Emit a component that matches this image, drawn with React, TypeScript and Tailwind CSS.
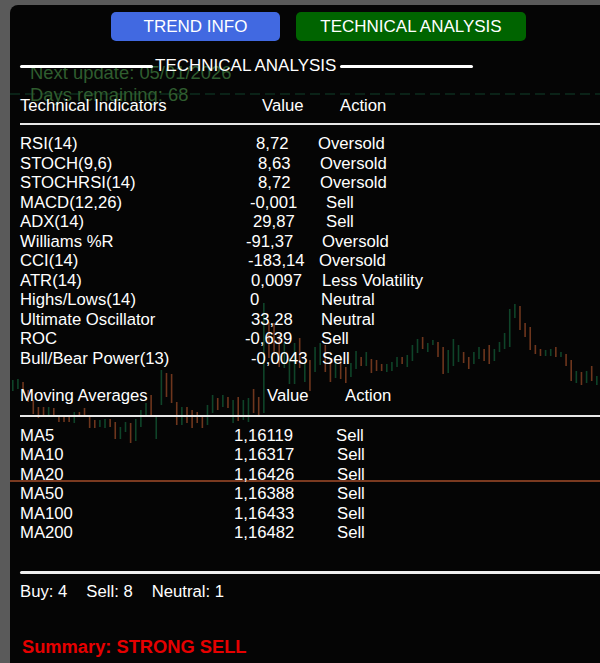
const G = "#0f4429";
const O = "#6e361d";

// [top, bottom, color] per candle, evenly spaced across the chart
const candles: [number, number, string][] = [
  [380, 391, G], [379, 389, G], [382, 393, O], [390, 402, O], [400, 414, O],
  [407, 418, O], [407, 417, O], [407, 417, G], [408, 417, O], [417, 422, O],
  [417, 422, O], [417, 422, O], [412, 423, G], [412, 417, O], [408, 417, O],
  [417, 428, O], [420, 428, O], [420, 427, G], [419, 428, G], [419, 427, O],
  [422, 439, O], [427, 439, G], [422, 432, G], [423, 443, O], [419, 441, G],
  [410, 427, G], [403, 417, G], [395, 417, O], [417, 439, G], [370, 405, G],
  [373, 397, O], [374, 403, O], [402, 425, O], [407, 425, G], [407, 423, O],
  [410, 428, O], [412, 423, O], [416, 428, O], [405, 425, G], [395, 413, G],
  [398, 410, O], [395, 407, G], [397, 408, O], [400, 423, G], [397, 421, O],
  [400, 420, G], [398, 422, G], [389, 413, O], [397, 417, O], [303, 413, G],
  [322, 358, O], [323, 355, O], [335, 367, O], [343, 368, G], [358, 384, G],
  [343, 384, G], [338, 368, O], [363, 382, G], [360, 391, O], [347, 372, G],
  [343, 365, G], [345, 372, O], [358, 382, O], [360, 378, G], [360, 379, O],
  [367, 383, O], [363, 377, G], [351, 369, G], [357, 366, O], [352, 366, G],
  [359, 373, O], [360, 371, O], [364, 371, O], [364, 372, G], [362, 371, G],
  [357, 367, G], [357, 364, O], [355, 367, G], [345, 361, G], [339, 353, G],
  [337, 349, O], [343, 352, G], [340, 345, G], [342, 357, O], [347, 374, O],
  [350, 373, G], [339, 366, G], [345, 362, G], [352, 363, O], [357, 369, O],
  [352, 364, G], [347, 359, G], [349, 361, O], [345, 364, O], [349, 361, G],
  [342, 352, G], [333, 349, G], [309, 347, G], [304, 318, G], [306, 330, O],
  [323, 337, O], [327, 350, O], [345, 354, O], [349, 356, O], [350, 356, G],
  [349, 356, G], [347, 357, O], [352, 357, G], [354, 366, O], [360, 381, O],
  [371, 383, G], [372, 385, O], [371, 383, G], [366, 381, O], [376, 385, G],
];

type Row = { name: string; value: string; action: string; valuePad: string; actionPad: string };

const indicators: Row[] = [
  { name: "RSI(14)", value: "8,72", action: "Oversold", valuePad: "pl-[26px]", actionPad: "pl-[0px]" },
  { name: "STOCH(9,6)", value: "8,63", action: "Oversold", valuePad: "pl-[28px]", actionPad: "pl-[2px]" },
  { name: "STOCHRSI(14)", value: "8,72", action: "Oversold", valuePad: "pl-[28px]", actionPad: "pl-[2px]" },
  { name: "MACD(12,26)", value: "-0,001", action: "Sell", valuePad: "pl-[20px]", actionPad: "pl-[8px]" },
  { name: "ADX(14)", value: "29,87", action: "Sell", valuePad: "pl-[23px]", actionPad: "pl-[8px]" },
  { name: "Williams %R", value: "-91,37", action: "Oversold", valuePad: "pl-[16px]", actionPad: "pl-[4px]" },
  { name: "CCI(14)", value: "-183,14", action: "Oversold", valuePad: "pl-[18px]", actionPad: "pl-[1px]" },
  { name: "ATR(14)", value: "0,0097", action: "Less Volatility", valuePad: "pl-[21px]", actionPad: "pl-[4px]" },
  { name: "Highs/Lows(14)", value: "0", action: "Neutral", valuePad: "pl-[20px]", actionPad: "pl-[3px]" },
  { name: "Ultimate Oscillator", value: "33,28", action: "Neutral", valuePad: "pl-[21px]", actionPad: "pl-[3px]" },
  { name: "ROC", value: "-0,639", action: "Sell", valuePad: "pl-[15px]", actionPad: "pl-[3px]" },
  { name: "Bull/Bear Power(13)", value: "-0,0043", action: "Sell", valuePad: "pl-[21px]", actionPad: "pl-[4px]" },
];

const averages: Row[] = [
  { name: "MA5", value: "1,16119", action: "Sell", valuePad: "pl-[4px]", actionPad: "pl-[18px]" },
  { name: "MA10", value: "1,16317", action: "Sell", valuePad: "pl-[4px]", actionPad: "pl-[19px]" },
  { name: "MA20", value: "1,16426", action: "Sell", valuePad: "pl-[4px]", actionPad: "pl-[19px]" },
  { name: "MA50", value: "1,16388", action: "Sell", valuePad: "pl-[4px]", actionPad: "pl-[19px]" },
  { name: "MA100", value: "1,16433", action: "Sell", valuePad: "pl-[4px]", actionPad: "pl-[19px]" },
  { name: "MA200", value: "1,16482", action: "Sell", valuePad: "pl-[4px]", actionPad: "pl-[19px]" },
];

function Chart() {
  return (
    <svg className="absolute left-0 top-0" width="600" height="663">
      {candles.map(([top, bottom, color], i) => (
        <rect key={i} x={12 + 5.123 * i} y={top} width="1.6" height={bottom - top} fill={color} />
      ))}
      <line x1="10" y1="94" x2="600" y2="94" stroke="#10402a" strokeWidth="1" strokeDasharray="10 5" />
      <line x1="10" y1="481" x2="600" y2="481" stroke="#7a3a20" strokeWidth="2" />
    </svg>
  );
}

function DataRow({ row }: { row: Row }) {
  return (
    <div className="flex h-[19.5px] items-center">
      <span className="w-[210px] shrink-0">{row.name}</span>
      <span className={`w-[88px] shrink-0 whitespace-nowrap ${row.valuePad}`}>{row.value}</span>
      <span className={`whitespace-nowrap ${row.actionPad}`}>{row.action}</span>
    </div>
  );
}

export default function App() {
  return (
    <div className="h-[663px] w-[600px] overflow-hidden bg-[#5a5a5a] pl-[10px] pt-[5px] font-['Liberation_Sans',Arial,sans-serif]">
      <div className="relative h-[658px] w-[590px] rounded-tl-lg bg-[#050505] text-[16.7px] leading-[19.5px] text-white">
        <div className="absolute left-[-10px] top-[-5px]">
          <Chart />
        </div>

        <div className="absolute left-[20px] top-[57px] text-[18.4px] leading-[22px] text-[#2f5d2f]">
          <p>Next update: 05/01/2026</p>
          <p>Days remaining: 68</p>
        </div>

        <div className="relative pl-[10px] pt-[7px]">
          <div className="ml-[91px] flex gap-[16px]">
            <button className="h-[29px] w-[169px] rounded-[5px] bg-[#4169e1] text-[17px] text-white">TREND INFO</button>
            <button className="h-[29px] w-[230px] rounded-[5px] bg-[#006400] text-[17px] text-white">TECHNICAL ANALYSIS</button>
          </div>

          <div className="mt-[15px] flex h-[20px] items-center">
            <div className="h-[3px] w-[133px] rounded-full bg-white" />
            <span className="w-[187px] whitespace-nowrap pl-[2px] text-[17px]">TECHNICAL ANALYSIS</span>
            <div className="h-[3px] w-[133px] rounded-full bg-white" />
          </div>

          <div className="mt-[20px] flex h-[20px] items-center">
            <span className="w-[242px] shrink-0">Technical Indicators</span>
            <span className="w-[78px] shrink-0">Value</span>
            <span>Action</span>
          </div>
          <div className="mt-[7px] h-[2px] bg-[#e8e8e8]" />

          <div className="mt-[9px]">
            {indicators.map((row) => (
              <DataRow key={row.name} row={row} />
            ))}
          </div>

          <div className="mt-[18px] flex h-[20px] items-center">
            <span className="w-[247px] shrink-0">Moving Averages</span>
            <span className="w-[78px] shrink-0">Value</span>
            <span>Action</span>
          </div>
          <div className="mt-[9px] h-[2px] bg-[#e8e8e8]" />

          <div className="mt-[8.5px]">
            {averages.map((row) => (
              <DataRow key={row.name} row={row} />
            ))}
          </div>

          <div className="mt-[28.5px] h-[3px] rounded-l-full bg-[#efefef]" />
          <div className="mt-[8px] flex h-[20px] items-center gap-[19px]">
            <span>Buy: 4</span>
            <span>Sell: 8</span>
            <span>Neutral: 1</span>
          </div>
          <p className="mt-[35px] pl-[2px] text-[18.3px] font-bold text-[#e60000]">Summary: STRONG SELL</p>
        </div>
      </div>
    </div>
  );
}
